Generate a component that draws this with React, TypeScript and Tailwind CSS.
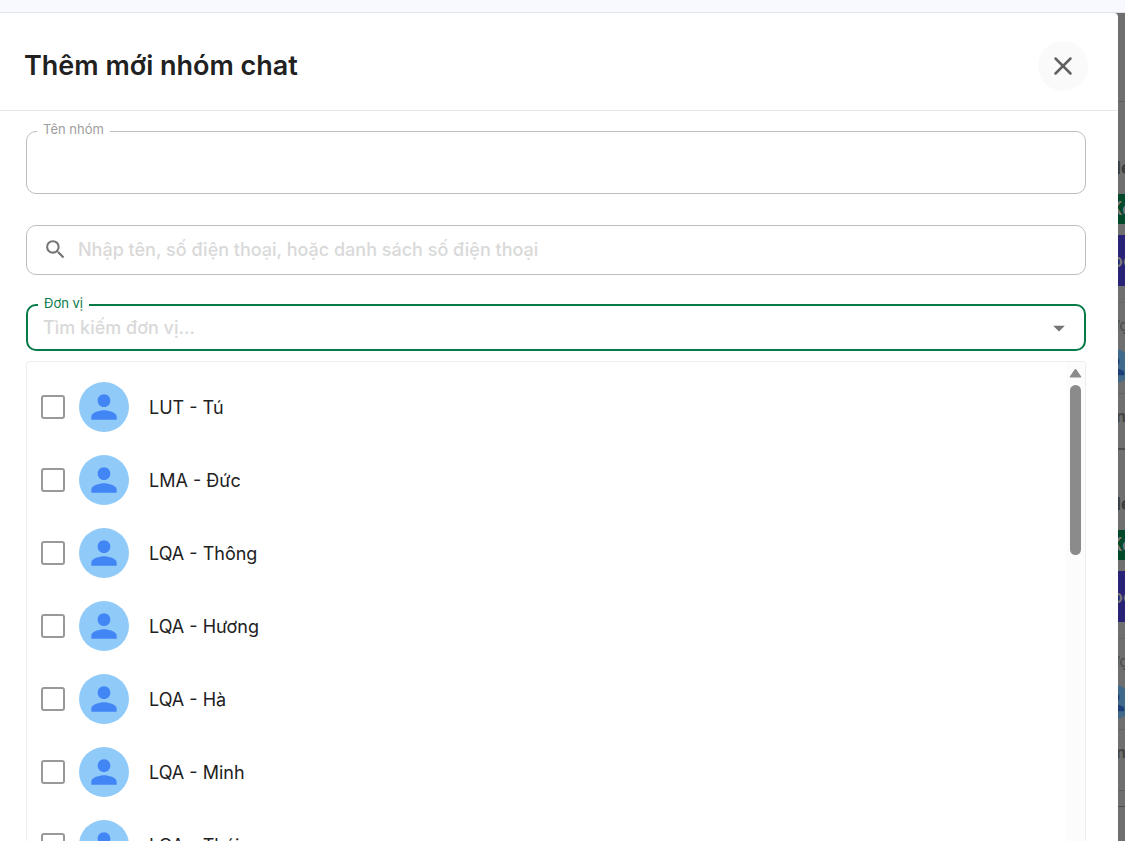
import { X } from "lucide-react";
import { MdArrowDropDown, MdPerson, MdSearch } from "react-icons/md";

const members = [
  "LUT - Tú",
  "LMA - Đức",
  "LQA - Thông",
  "LQA - Hương",
  "LQA - Hà",
  "LQA - Minh",
  "LQA - Thái",
];

const MemberRow = ({ name, id }: { name: string; id: string }) => (
  <li>
    <label htmlFor={id} className="flex h-[73px] items-center pl-3.5">
      <input
        id={id}
        type="checkbox"
        className="size-6 shrink-0 appearance-none rounded-[3px] border-2 border-[#999] checked:bg-[#077a48]"
      />
      <span className="ml-3.5 flex size-[50px] shrink-0 items-center justify-center rounded-full bg-[#90caf9]">
        <MdPerson size={38} className="text-[#4285f4]" />
      </span>
      <span className="ml-5 pt-0.5 text-lg text-[#212121]">{name}</span>
    </label>
  </li>
);

// Sliver of the page that stays visible beside the dialog, under the overlay
const PageCard = () => (
  <div className="flex h-[334px] shrink-0 flex-col whitespace-nowrap">
    <div className="flex h-20 shrink-0 items-end pb-3 text-lg font-bold leading-7 text-[#3a3a3a]">
      <span className="-ml-0.5">le</span>
    </div>
    <div className="h-[30px] shrink-0 bg-[#00482a] text-lg font-semibold leading-[30px] text-[#777]">
      <span className="-ml-2">Kê</span>
    </div>
    <div className="mt-[11px] h-[51px] shrink-0 bg-[#292377] text-lg font-semibold leading-[51px] text-[#777]">
      <span className="-ml-1.5">oo</span>
    </div>
    <div className="mt-4 shrink-0 border-t border-[#666] pt-2.5 text-base leading-6 text-[#4c4c4c]">
      <span className="-ml-2">ượ</span>
    </div>
    <div className="-ml-5 mt-3 flex size-[34px] shrink-0 items-center justify-center rounded-full bg-[#416a8a]">
      <MdPerson size={28} className="shrink-0 text-[#1d3f78]" />
    </div>
    <div className="mt-2.5 shrink-0 border-t border-[#606060] pt-2.5 text-base font-bold leading-6 text-[#444]">
      <span className="-ml-0.5">n</span>
    </div>
  </div>
);

const App = () => {
  return (
    <div className="flex h-screen flex-col overflow-hidden bg-white font-['Inter','Noto_Sans',sans-serif]">
      <div className="h-[13px] shrink-0 border-b border-[#dfe3ea] bg-[#f8f9ff]" />

      <div className="flex min-h-0 flex-1 bg-[#6f6f6f]">
        <div role="dialog" aria-labelledby="dialog-title" className="flex min-w-0 flex-1 flex-col rounded-tr bg-white">
          <header className="flex h-[98px] shrink-0 items-center justify-between border-b border-[#e8e8e8] pl-6 pr-[30px] pt-2">
            <h1 id="dialog-title" className="pt-0.5 text-[27px] font-semibold text-[#212121]">
              Thêm mới nhóm chat
            </h1>
            <button
              type="button"
              aria-label="Đóng"
              className="flex size-[50px] items-center justify-center rounded-full bg-[#fafafa]"
            >
              <X size={30} strokeWidth={2} className="text-[#616161]" />
            </button>
          </header>

          <form className="flex min-h-0 flex-1 flex-col pl-[26px] pr-8 pt-2.5">
            <fieldset className="min-w-0 shrink-0 rounded-[10px] border border-[#bdbdbd]">
              <legend className="ml-2.5 px-1.5 pb-1 text-[13px] leading-4 text-[#9e9e9e]">
                <label htmlFor="group-name">Tên nhóm</label>
              </legend>
              <input id="group-name" type="text" className="block h-[52px] w-full px-4 text-lg outline-none" />
            </fieldset>

            <div className="mt-[31px] flex h-[50px] shrink-0 items-center rounded-[10px] border border-[#bdbdbd] pb-0.5 pl-4">
              <MdSearch size={25} className="shrink-0 text-[#757575]" />
              <input
                type="text"
                aria-label="Tìm kiếm thành viên"
                placeholder="Nhập tên, số điện thoại, hoặc danh sách số điện thoại"
                className="ml-2.5 h-full min-w-0 flex-1 text-lg font-medium outline-none placeholder:text-[#d9d9d9]"
              />
            </div>

            <fieldset className="mt-5 min-w-0 shrink-0 rounded-[10px] border-2 border-[#077a48]">
              <legend className="ml-2.5 px-1.5 pb-1 text-[13px] leading-4 text-[#077a48]">
                <label htmlFor="unit">Đơn vị</label>
              </legend>
              <div className="flex h-[34px] items-center pb-2 pl-[15px] pr-[11px]">
                <input
                  id="unit"
                  type="text"
                  placeholder="Tìm kiếm đơn vị..."
                  className="min-w-0 flex-1 text-lg font-medium outline-none placeholder:text-[#d9d9d9]"
                />
                <MdArrowDropDown size={28} className="shrink-0 text-[#757575]" />
              </div>
            </fieldset>

            <div className="mt-2.5 flex min-h-0 flex-1 overflow-hidden rounded-t border border-b-0 border-[#eee]">
              <ul className="flex-1 pt-2">
                {members.map((name, i) => (
                  <MemberRow key={name} id={`member-${i}`} name={name} />
                ))}
              </ul>
              <div className="flex w-[19px] flex-col items-center bg-[#fcfcfc] pt-1.5">
                <svg width="13" height="10" viewBox="0 0 13 10" className="shrink-0 text-[#8b8b8b]">
                  <path d="M6.5 1 12 9H1Z" fill="currentColor" stroke="currentColor" strokeLinejoin="round" />
                </svg>
                <div className="mt-[7px] h-[170px] w-[11px] shrink-0 rounded-full bg-[#8b8b8b]" />
              </div>
            </div>
          </form>
        </div>

        <div aria-hidden="true" className="flex w-[7px] shrink-0 flex-col overflow-hidden">
          <div className="mb-3 h-[89px] shrink-0 border-b border-[#5f5f5f]" />
          <PageCard />
          <div className="h-0.5 shrink-0 bg-[#4c4c4c]" />
          <PageCard />
          <div className="mt-1.5 h-[17px] shrink-0 border-b border-t border-b-[#4c4c4c] border-t-[#5f5f5f]" />
        </div>
      </div>
    </div>
  );
};

export default App;
